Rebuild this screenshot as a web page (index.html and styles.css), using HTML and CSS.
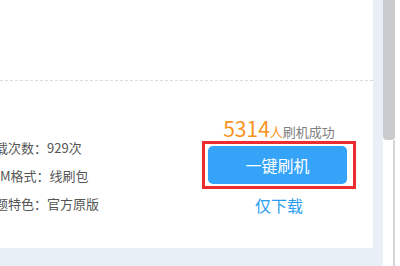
FILE: index.html
```html
<!DOCTYPE html>
<html lang="zh-CN">
<head>
<meta charset="utf-8">
<title>刷机</title>
<link rel="stylesheet" href="styles.css">
</head>
<body>
<div class="page">
  <div class="content">
    <div class="card">
      <div class="card-top"></div>
      <div class="details">
        <ul class="specs">
          <li>下载次数：929次</li>
          <li>ROM格式：线刷包</li>
          <li>主题特色：官方原版</li>
        </ul>
        <div class="actions">
          <div class="stat"><span class="num">5314</span><span class="unit">人</span><span class="label">刷机成功</span></div>
          <div class="highlight"><button class="flash-btn">一键刷机</button></div>
          <a class="download">仅下载</a>
        </div>
      </div>
    </div>
  </div>
  <div class="scrollbar"><div class="thumb"></div></div>
</div>
</body>
</html>
```

FILE: styles.css
```css
html, body {
  margin: 0;
  padding: 0;
}
body {
  width: 400px;
  height: 266px;
  overflow: hidden;
  background: #ffffff;
  font-family: "Microsoft YaHei", "Noto Sans CJK SC", sans-serif;
}
.page {
  display: flex;
  width: 400px;
  height: 266px;
}
.content {
  width: 383px;
  height: 266px;
  background: #e9eff6;
  padding-right: 10px;
  box-sizing: border-box;
}
.card {
  width: 373px;
  height: 248px;
  background: #ffffff;
  overflow: hidden;
}
.card-top {
  height: 80px;
  border-bottom: 1px dashed #d9dde2;
}
.details {
  display: grid;
  grid-template-columns: 220px 154px;
  margin-left: -18px;
}
.specs {
  list-style: none;
  margin: 53px 0 0 0;
  padding: 0;
  font-size: 13px;
  line-height: 28px;
  color: #555555;
}
.actions {
  display: flex;
  flex-direction: column;
  align-items: center;
  margin-top: 35px;
}
.stat {
  height: 25px;
  line-height: 24px;
  white-space: nowrap;
}
.num {
  font-size: 21px;
  color: #f7941d;
}
.unit {
  font-size: 13px;
  color: #f7941d;
}
.label {
  font-size: 13px;
  color: #808080;
}
.highlight {
  border: 3px solid #ee2b2f;
  padding: 2px 5px 2px 3px;
  width: 154px;
  box-sizing: border-box;
}
.flash-btn {
  display: block;
  width: 139px;
  height: 38px;
  border: 0;
  border-radius: 5px;
  background: #34a3f8;
  color: #ffffff;
  font-family: inherit;
  font-size: 16px;
  padding: 0;
}
.download {
  margin-top: 6px;
  font-size: 16px;
  line-height: 20px;
  color: #2b9ef2;
}
.scrollbar {
  width: 17px;
  height: 266px;
  background: #ffffff;
}
.scrollbar::after {
  content: "";
  display: block;
  width: 2px;
  height: 126px;
  background: #d3d5d6;
  margin-left: 10px;
}
.thumb {
  width: 12px;
  height: 140px;
  background: #c9cbcc;
  border-radius: 0 0 4px 4px;
}
```
